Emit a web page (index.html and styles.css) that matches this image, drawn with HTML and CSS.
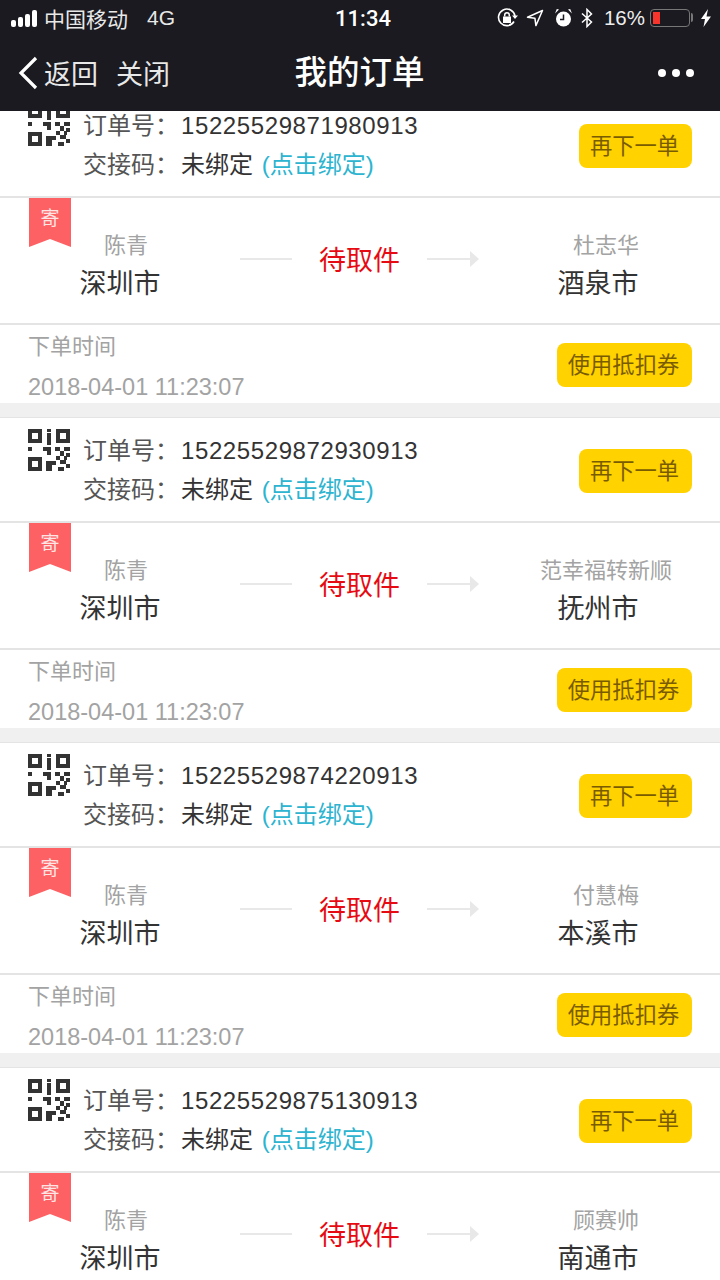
FILE: index.html
```html
<!DOCTYPE html>
<html>
  <head>
    <meta name="viewport" content="width=device-width, initial-scale=1" />
    <title>我的订单</title>
    <link rel="stylesheet" href="styles.css">
  </head>
  <body>
    <svg class="defs" width="0" height="0">
      <symbol id="qr" viewBox="0 0 42 42">
        <path fill="#333" fill-rule="evenodd" d="M0 0h14v14H0zM4 4v6h6V4zM28 0h14v14H28zM32 4v6h6V4zM0 28h14v14H0zM4 32v6h6v-6z"/>
        <path fill="#333" d="M19 0h4v3h-4zM19 4h4v12h-4zM0 18h4v4H0zM15 18h8v4h-8zM19 22h4v4h-4zM27 18h5v4h-5zM36 18h6v4h-6zM32 22h4v5h-4zM38 24h4v4h-4zM28 27h4v4h-4zM36 27h3v4h-3zM32 31h6v4h-6zM18 32h10v4h-4v6h-6zM38 35h4v4h-4zM30 38h6v4h-6z"/>
      </symbol>
      <symbol id="arrow" viewBox="0 0 52 18">
        <path fill="#e8e8e8" d="M0 8h43V1l9 8-9 8v-7H0z"/>
      </symbol>
    </svg>

    <header class="topbar">
      <div class="status">
        <div class="status-left">
          <span class="signal"><i></i><i></i><i></i><i></i></span>
          <span class="carrier">中国移动</span>
          <span class="net">4G</span>
        </div>
        <div class="clock">11:34</div>
        <div class="status-right">
          <svg class="ic" width="22" height="22" viewBox="0 0 22 22">
            <path fill="none" stroke="#fff" stroke-width="1.6" d="M18 14.500A8.300 8.300 0 1 1 19 9"/>
            <path fill="#fff" d="M16 8.500h6l-3 3.500zM7 9.500h8V16H7z"/>
            <path fill="none" stroke="#fff" stroke-width="1.500" d="M8.700 9.500V8a2.300 2.300 0 0 1 4.600 0v1.500"/>
          </svg>
          <svg class="ic ic-loc" width="18" height="18" viewBox="0 0 18 18">
            <path fill="none" stroke="#fff" stroke-width="1.500" stroke-linejoin="round" d="M16.500 1.500 1.500 8.200l7.400 1 1 7.400z"/>
          </svg>
          <svg class="ic" width="19" height="20" viewBox="0 0 19 20">
            <circle cx="9.500" cy="11" r="7.500" fill="#fff"/>
            <path fill="none" stroke="#1a1a20" stroke-width="1.500" d="M9.500 6.500V11.500H6"/>
            <path fill="#fff" d="M1 5.500 5 1.500 2.800 1zM18 5.500l-4-4 2.200-.5z"/>
          </svg>
          <svg class="ic ic-bt" width="12" height="20" viewBox="0 0 12 20">
            <path fill="none" stroke="#fff" stroke-width="1.500" d="M1 5.500 10.500 14 6 18.500V1.500L10.500 6 1 14.500"/>
          </svg>
          <span class="battery-pct">16%</span>
          <span class="battery"><span class="battery-fill"></span></span>
          <svg class="ic" width="12" height="18" viewBox="0 0 12 18">
            <path fill="#fff" d="M8 0 1 10h4l-1.500 8L11 7.500H6.500z"/>
          </svg>
        </div>
      </div>
      <nav class="nav">
        <div class="nav-left">
          <svg class="back" width="20" height="34" viewBox="0 0 20 34">
            <path fill="none" stroke="#fff" stroke-width="3.200" d="M18 2 3 17l15 15"/>
          </svg>
          <span>返回</span>
          <span class="close">关闭</span>
        </div>
        <h1 class="title">我的订单</h1>
        <div class="more"><i></i><i></i><i></i></div>
      </nav>
    </header>

    <main class="orders">
      <section class="order">
        <div class="order-head">
          <svg class="qr" width="42" height="42"><use href="#qr"/></svg>
          <div class="order-info">
            <p><span class="key">订单号：</span><span class="order-no">15225529871980913</span></p>
            <p><span class="key">交接码：</span>未绑定 <a class="bind">(点击绑定)</a></p>
          </div>
          <button class="btn btn-again">再下一单</button>
        </div>
        <div class="route">
          <span class="tag">寄</span>
          <div class="party"><span class="name">陈青</span><span class="city">深圳市</span></div>
          <div class="state">
            <span class="line"></span>
            <span class="state-text">待取件</span>
            <svg class="arrow" width="52" height="18"><use href="#arrow"/></svg>
          </div>
          <div class="party party-to"><span class="name">杜志华</span><span class="city">酒泉市</span></div>
        </div>
        <div class="order-foot">
          <div class="time"><span>下单时间</span><span class="date">2018-04-01 11:23:07</span></div>
          <button class="btn btn-coupon">使用抵扣券</button>
        </div>
      </section>

      <section class="order">
        <div class="order-head">
          <svg class="qr" width="42" height="42"><use href="#qr"/></svg>
          <div class="order-info">
            <p><span class="key">订单号：</span><span class="order-no">15225529872930913</span></p>
            <p><span class="key">交接码：</span>未绑定 <a class="bind">(点击绑定)</a></p>
          </div>
          <button class="btn btn-again">再下一单</button>
        </div>
        <div class="route">
          <span class="tag">寄</span>
          <div class="party"><span class="name">陈青</span><span class="city">深圳市</span></div>
          <div class="state">
            <span class="line"></span>
            <span class="state-text">待取件</span>
            <svg class="arrow" width="52" height="18"><use href="#arrow"/></svg>
          </div>
          <div class="party party-to"><span class="name">范幸福转新顺</span><span class="city">抚州市</span></div>
        </div>
        <div class="order-foot">
          <div class="time"><span>下单时间</span><span class="date">2018-04-01 11:23:07</span></div>
          <button class="btn btn-coupon">使用抵扣券</button>
        </div>
      </section>

      <section class="order">
        <div class="order-head">
          <svg class="qr" width="42" height="42"><use href="#qr"/></svg>
          <div class="order-info">
            <p><span class="key">订单号：</span><span class="order-no">15225529874220913</span></p>
            <p><span class="key">交接码：</span>未绑定 <a class="bind">(点击绑定)</a></p>
          </div>
          <button class="btn btn-again">再下一单</button>
        </div>
        <div class="route">
          <span class="tag">寄</span>
          <div class="party"><span class="name">陈青</span><span class="city">深圳市</span></div>
          <div class="state">
            <span class="line"></span>
            <span class="state-text">待取件</span>
            <svg class="arrow" width="52" height="18"><use href="#arrow"/></svg>
          </div>
          <div class="party party-to"><span class="name">付慧梅</span><span class="city">本溪市</span></div>
        </div>
        <div class="order-foot">
          <div class="time"><span>下单时间</span><span class="date">2018-04-01 11:23:07</span></div>
          <button class="btn btn-coupon">使用抵扣券</button>
        </div>
      </section>

      <section class="order">
        <div class="order-head">
          <svg class="qr" width="42" height="42"><use href="#qr"/></svg>
          <div class="order-info">
            <p><span class="key">订单号：</span><span class="order-no">15225529875130913</span></p>
            <p><span class="key">交接码：</span>未绑定 <a class="bind">(点击绑定)</a></p>
          </div>
          <button class="btn btn-again">再下一单</button>
        </div>
        <div class="route">
          <span class="tag">寄</span>
          <div class="party"><span class="name">陈青</span><span class="city">深圳市</span></div>
          <div class="state">
            <span class="line"></span>
            <span class="state-text">待取件</span>
            <svg class="arrow" width="52" height="18"><use href="#arrow"/></svg>
          </div>
          <div class="party party-to"><span class="name">顾赛帅</span><span class="city">南通市</span></div>
        </div>
      </section>
    </main>
  </body>
</html>
```

FILE: styles.css
```css
html, body {
  margin: 0;
  height: 1280px;
  overflow: hidden;
}
body {
  display: flex;
  flex-direction: column;
  background: #fff;
  color: #333;
  font-family: "Liberation Sans", "Noto Sans CJK SC", sans-serif;
}
.defs {
  position: absolute;
}

/* Status bar and nav */
.topbar {
  flex: none;
  position: relative;
  z-index: 1;
  height: 111px;
  background: #1a1a20;
  color: #fff;
}
.status {
  display: flex;
  align-items: center;
  justify-content: space-between;
  height: 36px;
  padding: 0 8px 0 11px;
  position: relative;
}
.status-left, .status-right {
  display: flex;
  align-items: center;
}
.status-left {
  font-size: 21px;
  color: #e8e8e8;
}
.signal {
  display: flex;
  align-items: flex-end;
  gap: 2px;
  height: 17px;
  margin-right: 7px;
}
.signal i {
  width: 5px;
  background: #fff;
  border-radius: 2px;
}
.signal i:nth-child(1) { height: 7px; }
.signal i:nth-child(2) { height: 10px; }
.signal i:nth-child(3) { height: 13px; }
.signal i:nth-child(4) { height: 17px; }
.net {
  margin-left: 19px;
}
.clock {
  position: absolute;
  left: 6px;
  right: 0;
  text-align: center;
  font-family: Roboto, sans-serif;
  font-size: 22px;
  font-weight: 500;
}
.status-right {
  position: relative;
  gap: 8px;
  font-size: 20.5px;
  color: #eee;
}
.ic {
  display: block;
}
.ic-loc {
  margin-right: 2px;
}
.ic-bt {
  margin-right: 3px;
}
.battery {
  display: block;
  position: relative;
  width: 40px;
  height: 18px;
  box-sizing: border-box;
  margin-left: -3px;
  margin-right: 2px;
  padding: 2px;
  border: 1.5px solid #777;
  border-radius: 4px;
}
.battery::after {
  content: '';
  position: absolute;
  top: 3px;
  right: -4px;
  width: 2px;
  height: 9px;
  background: #777;
  border-radius: 0 2px 2px 0;
}
.battery-fill {
  display: block;
  width: 7px;
  height: 100%;
  background: #f8352d;
}
.nav {
  display: flex;
  align-items: center;
  height: 73px;
  padding: 0 19px 2px;
  position: relative;
}
.nav-left {
  display: flex;
  align-items: center;
  font-size: 27px;
  color: #e8e8e8;
}
.back {
  margin-left: -1px;
  margin-right: 6px;
}
.close {
  margin-left: 18px;
}
.title {
  position: absolute;
  left: 0;
  right: 1px;
  top: 17px;
  margin: 0;
  text-align: center;
  font-size: 32.5px;
  line-height: 40px;
  font-weight: 500;
}
.more {
  display: flex;
  gap: 6px;
  margin-left: auto;
  margin-right: 7px;
}
.more i {
  width: 8px;
  height: 8px;
  border-radius: 50%;
  background: #fff;
}

/* Order list */
.orders {
  flex: 1;
  overflow: hidden;
}
.order {
  border-top: 1px solid #e4e4e4;
  border-bottom: 14px solid #f0f0f0;
}
.order:first-child {
  margin-top: -19px;
}
.order-head {
  display: flex;
  align-items: flex-start;
  height: 105px;
  padding: 11px 28px 0;
  box-sizing: border-box;
  border-bottom: 2px solid #e4e4e4;
}
.qr {
  flex: none;
  margin-right: 13px;
}
.order-info {
  flex: 1;
  margin-top: 2px;
  font-size: 24px;
  color: #333;
}
.order-info p {
  margin: 0;
  height: 39px;
  line-height: 39px;
}
.key {
  display: inline-block;
  width: 98px;
  color: #555;
}
.order-no {
  letter-spacing: 0.6px;
}
.bind {
  margin-left: 2px;
  color: #2cb4d0;
}
.btn {
  flex: none;
  border: 0;
  border-radius: 8px;
  background: #ffd200;
  color: #7a5c00;
  font: inherit;
  font-size: 22.3px;
  height: 44px;
  padding: 0 2px 5px 0;
}
.btn-again {
  width: 113px;
  margin-top: 20px;
}
.btn-coupon {
  width: 135px;
  margin-top: 2px;
}
.route {
  display: flex;
  align-items: center;
  position: relative;
  height: 127px;
  box-sizing: border-box;
  border-bottom: 2px solid #e4e4e4;
}
.tag {
  position: absolute;
  top: 0;
  left: 29px;
  width: 42px;
  height: 49px;
  padding-top: 5px;
  box-sizing: border-box;
  background: #fd6164;
  color: #ffe4e4;
  font-size: 19px;
  text-align: center;
  clip-path: polygon(0 0, 100% 0, 100% 100%, 50% 41px, 0 100%);
}
.party {
  display: flex;
  flex: none;
  flex-direction: column;
  align-items: center;
  width: 240px;
  padding-top: 14px;
}
.name {
  margin-left: 12px;
  font-size: 22px;
  line-height: 32px;
  color: #a3a3a3;
}
.city {
  font-size: 27px;
  line-height: 44px;
  color: #333;
}
.party-to .city {
  margin-right: 4px;
}
.state {
  display: flex;
  flex: 1;
  align-items: center;
  justify-content: center;
  gap: 27px;
  padding: 0 1px 4px 0;
  white-space: nowrap;
}
.line {
  flex: none;
  width: 52px;
  height: 2px;
  background: #e8e8e8;
}
.arrow {
  flex: none;
}
.state-text {
  flex: none;
  font-size: 27px;
  color: #e60b12;
}
.order-foot {
  display: flex;
  align-items: center;
  justify-content: space-between;
  height: 78px;
  padding: 0 28px;
}
.time {
  display: flex;
  flex-direction: column;
  gap: 14px;
  font-size: 22px;
  color: #a3a3a3;
}
.date {
  font-size: 23.5px;
}
```
